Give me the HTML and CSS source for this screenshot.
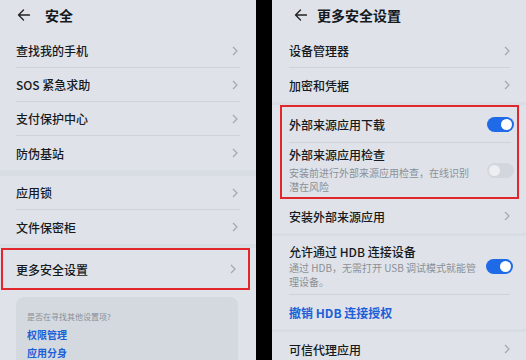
FILE: index.html
```html
<!DOCTYPE html>
<html lang="zh-CN">
<head>
  <meta charset="UTF-8">
  <meta name="viewport" content="width=device-width, initial-scale=1.0">
  <title>安全设置</title>
  <link rel="stylesheet" href="styles.css">
</head>
<body>
  <div class="screens">

    <section class="phone phone-left">
      <header class="bar">
        <svg class="back" width="13" height="12" viewBox="0 0 13 12"><path d="M12.5 6H1.5M6.5 1L1.5 6l5 5" fill="none" stroke="#222" stroke-width="1.3" stroke-linecap="round" stroke-linejoin="round"/></svg>
        <h1>安全</h1>
      </header>

      <ul class="list">
        <li class="row"><span>查找我的手机</span><svg class="chev" width="6" height="10" viewBox="0 0 6 10"><path d="M1 1l4 4-4 4" fill="none" stroke="#a3a8ae" stroke-width="1.2"/></svg></li>
        <li class="row"><span>SOS 紧急求助</span><svg class="chev" width="6" height="10" viewBox="0 0 6 10"><path d="M1 1l4 4-4 4" fill="none" stroke="#a3a8ae" stroke-width="1.2"/></svg></li>
        <li class="row"><span>支付保护中心</span><svg class="chev" width="6" height="10" viewBox="0 0 6 10"><path d="M1 1l4 4-4 4" fill="none" stroke="#a3a8ae" stroke-width="1.2"/></svg></li>
        <li class="row"><span>防伪基站</span><svg class="chev" width="6" height="10" viewBox="0 0 6 10"><path d="M1 1l4 4-4 4" fill="none" stroke="#a3a8ae" stroke-width="1.2"/></svg></li>
      </ul>
      <div class="band"></div>
      <ul class="list">
        <li class="row"><span>应用锁</span><svg class="chev" width="6" height="10" viewBox="0 0 6 10"><path d="M1 1l4 4-4 4" fill="none" stroke="#a3a8ae" stroke-width="1.2"/></svg></li>
        <li class="row"><span>文件保密柜</span><svg class="chev" width="6" height="10" viewBox="0 0 6 10"><path d="M1 1l4 4-4 4" fill="none" stroke="#a3a8ae" stroke-width="1.2"/></svg></li>
      </ul>
      <div class="band band-thin"></div>
      <div class="hl hl-left">
        <div class="row row-tall"><span>更多安全设置</span><svg class="chev" width="6" height="10" viewBox="0 0 6 10"><path d="M1 1l4 4-4 4" fill="none" stroke="#a3a8ae" stroke-width="1.2"/></svg></div>
      </div>

      <div class="tip">
        <p class="tip-q">是否在寻找其他设置项?</p>
        <a class="tip-link">权限管理</a>
        <a class="tip-link">应用分身</a>
      </div>
    </section>

    <section class="phone phone-right">
      <header class="bar">
        <svg class="back" width="13" height="12" viewBox="0 0 13 12"><path d="M12.5 6H1.5M6.5 1L1.5 6l5 5" fill="none" stroke="#222" stroke-width="1.3" stroke-linecap="round" stroke-linejoin="round"/></svg>
        <h1>更多安全设置</h1>
      </header>

      <ul class="list">
        <li class="row"><span>设备管理器</span><svg class="chev" width="6" height="10" viewBox="0 0 6 10"><path d="M1 1l4 4-4 4" fill="none" stroke="#a3a8ae" stroke-width="1.2"/></svg></li>
        <li class="row"><span>加密和凭据</span><svg class="chev" width="6" height="10" viewBox="0 0 6 10"><path d="M1 1l4 4-4 4" fill="none" stroke="#a3a8ae" stroke-width="1.2"/></svg></li>
      </ul>
      <div class="band band-thin"></div>
      <div class="hl hl-right">
        <div class="row row-switch">
          <span>外部来源应用下载</span>
          <span class="switch on"><span class="knob"></span></span>
        </div>
        <div class="row row-multi">
          <div class="texts">
            <span>外部来源应用检查</span>
            <p class="sub">安装前进行外部来源应用检查，在线识别潜在风险</p>
          </div>
          <span class="switch off"><span class="knob"></span></span>
        </div>
      </div>
      <ul class="list">
        <li class="row"><span>安装外部来源应用</span><svg class="chev" width="6" height="10" viewBox="0 0 6 10"><path d="M1 1l4 4-4 4" fill="none" stroke="#a3a8ae" stroke-width="1.2"/></svg></li>
      </ul>
      <div class="band band-thin"></div>
      <ul class="list">
        <li class="row row-multi row-hdb">
          <div class="texts">
            <span>允许通过 HDB 连接设备</span>
            <p class="sub">通过 HDB，无需打开 USB 调试模式就能管理设备。</p>
          </div>
          <span class="switch on"><span class="knob"></span></span>
        </li>
        <li class="row"><a class="link">撤销 HDB 连接授权</a></li>
      </ul>
      <div class="band band-thin"></div>
      <ul class="list">
        <li class="row"><span>可信代理应用</span><svg class="chev" width="6" height="10" viewBox="0 0 6 10"><path d="M1 1l4 4-4 4" fill="none" stroke="#a3a8ae" stroke-width="1.2"/></svg></li>
      </ul>
    </section>

  </div>
</body>
</html>
```

FILE: styles.css
```css
body {
  margin: 0;
  padding: 0;
  font-family: "Noto Sans CJK SC", "Noto Sans", sans-serif;
  background: #000;
  color: #16191d;
}

.screens {
  display: flex;
  width: 526px;
  height: 360px;
  overflow: hidden;
  background: #000;
}

.phone {
  height: 360px;
  overflow: hidden;
  background: #dfe3e9;
}

.phone-left {
  width: 256px;
}

.phone-right {
  width: 254px;
  margin-left: 16px;
}

.bar {
  display: flex;
  align-items: center;
  height: 29px;
  margin-bottom: 5px;
  padding-left: 17px;
  gap: 15px;
}

.phone-right .bar {
  padding-left: 22px;
  gap: 10px;
}

.bar h1 {
  margin: 0;
  font-size: 14px;
  font-weight: 700;
  color: #15181c;
}

.back {
  display: block;
}

.list {
  list-style: none;
  margin: 0;
  padding: 0 16px;
}

.phone-right .list {
  padding: 0 16px 0 17px;
}

.row {
  display: flex;
  align-items: center;
  justify-content: space-between;
  height: 34px;
  box-sizing: border-box;
  padding-right: 2px;
  border-bottom: 1px solid #ced3da;
  font-size: 12px;
  font-weight: 500;
}

.row:last-child {
  border-bottom: none;
}

.phone-right .row {
  padding-right: 0;
}

.chev {
  display: block;
  flex: none;
}

.band {
  height: 6px;
  background: #d8dde3;
}

.band-thin {
  height: 3px;
}

.phone-left .band-thin {
  height: 4px;
}

.hl {
  border: 2px solid #e3262b;
}

.hl-left {
  margin: 0 6px 0 1px;
  padding: 0 10px 0 13px;
}

.hl-left .row-tall {
  height: 38px;
}

.hl-right {
  margin: 0 7px 0 8px;
  padding: 0 6px 0 7px;
}

.row-switch {
  height: 36px;
}

.row-multi {
  height: auto;
  padding: 4px 0 3px;
}

.row-hdb {
  padding: 8px 0 5px;
}

.texts {
  display: flex;
  flex-direction: column;
  line-height: 16px;
}

.sub {
  margin: 3px 0 0;
  max-width: 189px;
  font-size: 10px;
  font-weight: 400;
  line-height: 14px;
  color: #8b9097;
}

.row-hdb .sub {
  margin-top: 1px;
}

.switch {
  display: flex;
  flex: none;
  width: 27px;
  height: 15px;
  box-sizing: border-box;
  padding: 2px;
  margin-right: -3px;
  border-radius: 8px;
  background: #1f6ae6;
  justify-content: flex-end;
}

.knob {
  width: 11px;
  height: 11px;
  border-radius: 50%;
  background: #fff;
}

.switch.off {
  justify-content: flex-start;
  background: #d2d7dd;
}

.switch.off .knob {
  background: #eceef1;
}

.link {
  color: #1d5fd8;
  font-weight: 700;
}

.tip {
  margin: 7px 18px 0 16px;
  padding: 13px 11px 12px;
  border-radius: 8px;
  background: #d4d9e0;
}

.tip-q {
  margin: 0 0 2px;
  font-size: 8px;
  line-height: 14px;
  color: #8a9097;
}

.tip-link {
  display: block;
  font-size: 10px;
  line-height: 18px;
  font-weight: 700;
  color: #1d5fd8;
}
```
